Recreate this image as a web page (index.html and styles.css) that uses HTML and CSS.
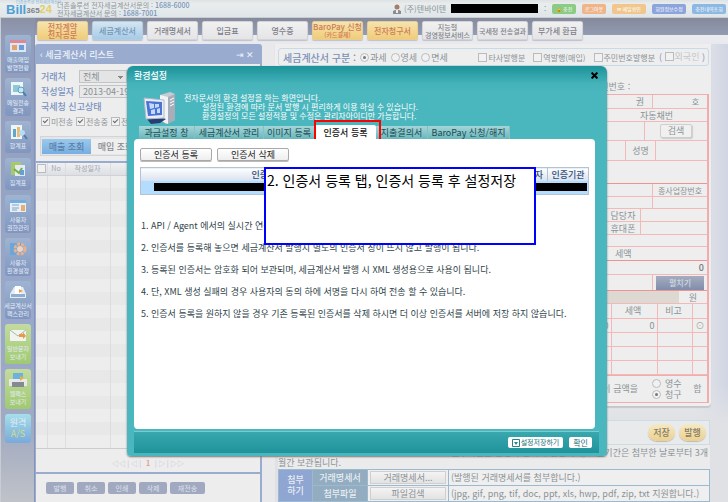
FILE: index.html
```html
<!DOCTYPE html>
<html lang="ko">
<head>
<meta charset="utf-8">
<title>Bill36524 환경설정</title>
<link rel="stylesheet" href="styles.css">
</head>
<body>
<header class="top">
  <a class="logo" href="#"><small>더존솔루션 전자세금계산서</small><span class="logo-name"><b>Bill</b><i>365</i><em>24</em></span></a>
  <p class="contact">더존솔루션 전자세금계산서문의 : <b>1688-6000</b><br>전자세금계산서 문의 : <b>1688-7001</b></p>
  <div class="account">
    <svg class="user" viewBox="0 0 8 10"><circle cx="4" cy="3" r="2.5" fill="#a77e69"/><path d="M0 10V7l2-1h4l2 1v3z" fill="#8c8c94"/><path d="M3 6h2v3H3z" fill="#eee"/></svg>
    <span class="company">(주)텐바이텐</span><span class="mask"></span><span class="colon">:</span>
    <button class="pill green">🔒 충전</button><button class="pill orange">로그아웃</button><button class="pill yellow wide">✉ 메일확인</button><button class="pill blue wide">회원정보수정</button><button class="pill sky wide">충전내역조회</button>
  </div>
</header>
<div class="app">
  <aside class="side">
    <a href="#" class="s-tall"><svg viewBox="0 0 20 16"><path d="M2 2h16v12H2z" fill="#dce7f3"/><path d="M2 2h16v3H2z" fill="#df8795"/><path d="M4 7h5v5H4z" fill="#e2a36e"/><path d="M11 7h5v5h-5z" fill="#6d9bdc"/></svg>매출매입<br>발행현황</a>
    <a href="#" class="s-tall"><svg viewBox="0 0 20 16"><path d="M3 1h12v13H3z" fill="#eef5f8"/><path d="M5 4h7v7H5z" fill="#8ec8d8"/><circle cx="13" cy="9" r="3" fill="#c7e7ee" stroke="#5d9ec2"/><path d="M15 11l3 4" stroke="#4b7fa9" stroke-width="2"/></svg>메일전송<br>결과</a>
    <a href="#" class="s-short"><svg viewBox="0 0 20 16"><path d="M3 1h11v14H3z" fill="#eef5f8"/><path d="M5 5h3v8H5z" fill="#5ea8ce"/><path d="M9 3h3v10H9z" fill="#e8bd72"/><circle cx="14" cy="9" r="3" fill="#b6dced"/><path d="M16 11l3 4" stroke="#537cac" stroke-width="2"/></svg>합계표</a>
    <a href="#" class="s-short"><svg viewBox="0 0 20 16"><path d="M3 1h10v13H3z" fill="#a8c96b"/><path d="M7 4h10v11H7z" fill="#e3eaf1"/><path d="M6 8l5 4 3-5" fill="none" stroke="#77ad49" stroke-width="2"/><path d="M12 9h4v5h-4z" fill="#64a0d8"/></svg>집계표</a>
    <a href="#" class="s-tall"><svg viewBox="0 0 20 16"><path d="M2 2h16v12H2z" fill="#e7eff5"/><path d="M2 2h16v3H2z" fill="#73aedd"/><path d="M4 7h7M4 10h7M4 12h5" stroke="#7da6cc"/><path d="M13 7h4v6h-4z" fill="#e9ad72"/></svg>사용자<br>권한관리</a>
    <a href="#" class="s-tall"><svg viewBox="0 0 20 16"><path d="M2 2h13v12H2z" fill="#6aa5dc"/><circle cx="12" cy="8" r="5" fill="none" stroke="#e9b18e" stroke-width="3" stroke-dasharray="3 1"/><circle cx="12" cy="8" r="3" fill="#edd4c2"/></svg>사용자<br>환경설정</a>
    <a href="#" class="s-tall"><svg viewBox="0 0 20 16"><path d="M2 10l4-7h9l3 7v4H2z" fill="#e4edf5"/><path d="M7 2h6v8H7z" fill="#fff"/><path d="M3 10h14v3H3z" fill="#90aed1"/><path d="M11 5l4 2-4 2z" fill="#e7a345"/></svg>세금계산서<br>팩스관리</a>
    <a href="#" class="s-green"><svg viewBox="0 0 20 16"><path d="M2 3h16v11H2z" fill="#f1f3ee"/><path d="M2 3l8 6 8-6" fill="none" stroke="#a8b8ac"/><path d="M11 7h4V5l3 4-3 3v-2h-4z" fill="#e79a4c"/></svg>일반문자<br>보내기</a>
    <a href="#" class="s-green"><svg viewBox="0 0 20 16"><path d="M5 1h10v8H5z" fill="#6db2dc"/><path d="M1 7h18v7H1z" fill="#e8e8ea"/><path d="M4 10h12v5H4z" fill="#848a91"/><path d="M12 4l4 2-4 3z" fill="#e8b04c"/></svg>웹팩스<br>보내기</a>
    <a href="#" class="s-as">원격<br><b>A/S</b></a>
  </aside>
  <div class="content">
    <nav class="menu">
      <a href="#" class="hot">전자계약<br>전자공문</a><a href="#" class="on">세금계산서</a><a href="#">거래명세서</a><a href="#">입금표</a><a href="#">영수증</a><a href="#" class="hot">BaroPay 신청<small>(카드결제)</small></a><a href="#" class="hot">전자청구서</a><a href="#" class="dense">지능형<br>경영정보서비스</a><a href="#" class="dense">국세청 전송결과</a><a href="#">부가세 환급</a>
    </nav>
    <div class="columns">
      <section class="list">
        <h2><span>세금계산서 리스트</span><span class="tools">⇥ ✕</span></h2>
        <div class="list-body">
          <div class="filters">
            <div class="frow"><label for="client">거래처</label><select id="client"><option>전체</option></select></div>
            <div class="frow"><label for="date">작성일자</label><input id="date" class="date" type="text" value="2013-04-19"></div>
            <div class="frow"><strong>국세청 신고상태</strong></div>
            <div class="frow checks"><label><input type="checkbox" checked>미전송</label><label><input type="checkbox" checked>전송중</label><label><input type="checkbox" checked>전송완료</label></div>
          </div>
          <div class="switch"><button class="sel">매출 조회</button><button>매입 조회</button></div>
          <table class="rows">
            <thead><tr><th class="c1"><input type="checkbox" aria-label="전체 선택"></th><th class="c2">No</th><th class="c3">작성일자</th><th></th></tr></thead>
            <tbody>
              <tr><td><td><td><td></tr><tr><td><td><td><td></tr><tr><td><td><td><td></tr><tr><td><td><td><td></tr><tr><td><td><td><td></tr><tr><td><td><td><td></tr><tr><td><td><td><td></tr>
              <tr><td><td><td><td></tr><tr><td><td><td><td></tr><tr><td><td><td><td></tr><tr><td><td><td><td></tr><tr><td><td><td><td></tr><tr><td><td><td><td></tr><tr><td><td><td><td></tr>
              <tr><td><td><td><td></tr><tr><td><td><td><td></tr><tr><td><td><td><td></tr><tr><td><td><td><td></tr><tr><td><td><td><td></tr><tr><td><td><td><td></tr><tr><td><td><td><td></tr>
            </tbody>
          </table>
          <div class="pager">◁◁ | ◁ | &nbsp; <b>1</b> &nbsp; | ▷ | ▷▷</div>
          <div class="actions"><button>발행</button><button>취소</button><button>인쇄</button><button>삭제</button><button class="long">재전송</button></div>
        </div>
      </section>
      <main class="doc">
        <div class="sheet">
          <div class="kind">
            <b>세금계산서 구분 :</b>
            <label><input type="radio" name="kind" checked>과세</label><label><input type="radio" name="kind">영세</label><label><input type="radio" name="kind">면세</label>
            <span class="kind-more"><label><input type="checkbox">타사발행분</label><label><input type="checkbox">역발행(매입)</label><label><input type="checkbox">주민번호발행분</label></span>
            <span class="foreign">( <label><input type="checkbox">외국인</label> )</span>
          </div>
          <p class="serial">일련번호 :</p>
          <div class="form">
            <div class="r h14"><span class="fill"></span><span class="w47 end">권</span><span class="w54 end">호</span></div>
            <div class="r h13"><span class="fill"></span><span class="w101">자동채번</span></div>
            <div class="r h19"><span class="fill"></span><span class="w62"><button class="find">검색</button></span></div>
            <div class="r h20"><span class="fill"></span><span class="w30">성명</span><span class="w51"></span></div>
            <div class="r h23 strong"><span class="fill"></span></div>
            <div class="r h13"><span class="fill"></span><span class="w54">종사업장번호</span></div>
            <div class="r h12"><span class="fill"></span><span class="w54"></span></div>
            <div class="r h13"><span class="fill"></span><span class="w35">담당자</span><span class="w66"></span></div>
            <div class="r h13"><span class="fill"></span><span class="w35">휴대폰</span><span class="w66"></span></div>
            <div class="r h12"><span class="fill"></span></div>
            <div class="r h14 strong"><span class="fill"></span><span class="w101 tax">세액</span></div>
            <div class="r h14"><span class="fill num">0</span></div>
            <div class="r h16 strong"><span class="fill"></span><span class="w54"><button class="fold">펼치기</button></span></div>
            <div class="r h13"><span class="fill beige"></span><span class="w28">원</span></div>
            <table class="items">
              <thead><tr><th></th><th class="i2">세액</th><th class="i3">비고</th><th class="i4"></th></tr></thead>
              <tbody><tr><td>0</td><td>0</td><td></td><td><button class="add" aria-label="추가">⊙</button></td></tr><tr><td><td><td><td></tr><tr><td><td><td><td></tr><tr><td><td><td><td></tr></tbody>
            </table>
            <div class="r sum"><span class="fill amount">이 금액을</span><span class="choice"><label><input type="radio" name="claim">영수</label><label><input type="radio" name="claim" checked>청구</label></span><span class="ham">함</span></div>
          </div>
        </div>
        <div class="save"><button>저장</button><button>발행</button></div>
        <p class="notice"><span>※ 첨부파일은 발행과 동시에 전송되며, 보관기간은 첨부한 날로부터 3개</span>월간 보관됩니다.</p>
        <table class="attach">
          <tr><th class="a1" rowspan="2">첨부<br>하기</th><th class="a2">거래명세서</th><td class="a3"><button>거래명세서...</button></td><td>(발행된 거래명세서를 첨부합니다.)</td></tr>
          <tr><th class="a2">첨부파일</th><td class="a3"><button>파일검색</button></td><td>(jpg, gif, png, tif, doc, ppt, xls, hwp, pdf, zip, txt 지원합니다.)</td></tr>
        </table>
      </main>
    </div>
  </div>
</div>

<div class="modal" role="dialog" aria-labelledby="dlg">
  <div class="m-title"><h1 id="dlg">환경설정</h1><button class="close" aria-label="닫기"><svg viewBox="0 0 6 6"><path d="M.5.5l5 5M5.5.5l-5 5" stroke="#000" stroke-width="1.700"/></svg></button></div>
  <div class="intro">
    <svg viewBox="0 0 34 34"><path d="M17 4l10-3 5 2v26l-9 4-6-4z" fill="#c7cbd2"/><path d="M17 4l8 2v27l-8-4z" fill="#f2f3f6"/><path d="M25 6l7-3v26l-7 4z" fill="#a7aeb9"/><path d="M27 9l4-2M27 12l4-2M27 15l4-2" stroke="#fff"/><path d="M4 28l8-3 11 3-6 4-9 1z" fill="#293d73"/><path d="M1 7l20 2v18L3 28z" fill="#e9edf5" stroke="#aeb9cc"/><path d="M3 10l16 1v13L5 25z" fill="#4a74d0"/><path d="M6 12l5 1v4l-4 1zM12 13h4v3l-4 1zM8 19l4-1v5H8zM14 18l3-1v5h-3z" fill="#c3d8ff"/></svg>
    <p>전자문서의 환경 설정을 하는 화면입니다.<span>설정된 환경에 따라 문서 발행 시 편리하게 이용 하실 수 있습니다.</span><span>환경설정의 모든 설정적용 및 수정은 관리자아이디만 가능합니다.</span></p>
  </div>
  <div class="tabs">
    <button class="t1">과금설정 창</button><button class="t2">세금계산서 관리</button><button class="t3">이미지 등록</button><button class="t4 active">인증서 등록</button><button class="t5">지출결의서</button><button class="t6">BaroPay 신청/해지</button>
    <span class="ring"></span>
  </div>
  <div class="pane">
    <div class="cert-buttons"><button>인증서 등록</button><button>인증서 삭제</button></div>
    <table class="certs">
      <thead><tr><th>인증서</th><th class="k2">만료일자</th><th class="k3">인증기관</th></tr></thead>
      <tbody><tr><td colspan="3"><span class="bar"></span></td></tr></tbody>
    </table>
    <ol>
      <li>1. API / Agent 에서의 실시간 연동시 인증서를 등록하여 주십시오.</li>
      <li>2. 인증서를 등록해 놓으면 세금계산서 발행시 별도의 인증서 창이 뜨지 않고 발행이 됩니다.</li>
      <li>3. 등록된 인증서는 암호화 되어 보관되며, 세금계산서 발행 시 XML 생성용으로 사용이 됩니다.</li>
      <li>4. 단, XML 생성 실패의 경우 사용자의 동의 하에 서명을 다시 하여 전송 할 수 있습니다.</li>
      <li>5. 인증서 등록을 원하지 않을 경우 기존 등록된 인증서를 삭제 하시면 더 이상 인증서를 서버에 저장 하지 않습니다.</li>
    </ol>
    <div class="note">2. 인증서 등록 탭, 인증서 등록 후 설정저장</div>
  </div>
  <div class="m-foot"><button class="store"><svg viewBox="0 0 8 8"><path d="M.5.5h7v7h-7z" fill="#fff" stroke="#24848b"/><path d="M2 3h4L4 6z" fill="#24848b"/></svg>설정저장하기</button><button>확인</button></div>
</div>
</body>
</html>
```
FILE: styles.css
```css
* { box-sizing: border-box; }
body { margin: 0; position: relative; min-height: 100vh; overflow: hidden; background: #e0e1e5; color: #8a9296; font: 9px/11px "Noto Sans CJK KR", sans-serif; }
h1, h2, p, ol { margin: 0; padding: 0; }
a { color: inherit; text-decoration: none; }
button, input, select { font: inherit; color: inherit; margin: 0; padding: 0; border: 0; white-space: nowrap; }
label { white-space: nowrap; }
table { border-collapse: collapse; width: 100%; }
th, td { padding: 0; font-weight: 400; }
svg { display: block; flex: none; }
input[type=checkbox], input[type=radio] { appearance: none; width: 9px; height: 9px; border: 1px solid #b9bcbf; background: #f1f1f1; display: inline-grid; place-content: center; flex: none; }
input[type=radio] { border-radius: 50%; }
input[type=radio]:checked::before { content: ""; width: 3px; height: 3px; border-radius: 50%; background: #777; }
input[type=checkbox]:checked::before { content: ""; width: 2px; height: 4px; margin-bottom: 2px; border: solid #666; border-width: 0 1px 1px 0; transform: rotate(45deg); }

.top { display: flex; align-items: center; height: 18px; padding: 0 2px 0 6px; background: linear-gradient(#dfe2e3, #e9edee 4px, #dfe5e8); font-size: 7px; line-height: 8px; border-bottom: 1px solid #c9cdd3; }
.logo { width: 51px; }
.logo small { display: block; height: 4px; padding-left: 10px; font-size: 4px; line-height: 4px; color: #7fb6dc; white-space: nowrap; }
.logo-name { display: flex; font: bold 11px/11px "Liberation Sans", sans-serif; }
.logo-name b { color: #4d9fd6; font-size: 13px; }
.logo-name i { font-style: normal; font-size: 8px; line-height: 13px; color: #7c8288; }
.logo-name em { font-style: normal; color: #e3cf63; }
.contact { color: #8c9298; white-space: nowrap; }
.contact b { color: #7694b9; font-weight: 500; }
.account { margin-left: auto; display: flex; align-items: center; gap: 6px; font-size: 8px; }
.user { width: 8px; height: 10px; }
.company { margin-left: -3px; width: 41px; white-space: nowrap; }
.mask { width: 87px; height: 9px; background: #000; }
.colon { width: 2px; }
.pill { width: 24px; height: 10px; border-radius: 2px; font-size: 5px; line-height: 8px; color: #fff; overflow: hidden; }
.wide { width: 34px; }
.green { background: #8ccb83; }
.orange { background: #f0b48a; }
.yellow { background: #f0c68c; }
.blue { background: #8ca3dc; }
.sky { background: #8db8e2; }

.app { display: flex; min-height: calc(100vh - 18px); }
.side { flex: none; width: 35px; display: flex; flex-direction: column; gap: 5px; padding: 17px 5px 0; background: linear-gradient(#8b91a4, #929dba 20px, #98a8cb 60%, #a1aac0 85%, #c0c3c9); border-right: 1px solid #8493b6; border-left: 1px solid #c8ccd5; }
.side a { width: 26px; margin-left: -1px; display: flex; flex-direction: column; align-items: center; padding-top: 3px; border-radius: 3px; background: linear-gradient(#9fb4d1, #8096bf); color: #e6ebf5; font-size: 6px; line-height: 8px; text-align: center; white-space: nowrap; }
.side svg { width: 20px; height: 16px; margin-bottom: 2px; }
.side .s-tall { height: 38px; }
.side .s-short { height: 32px; }
.side .s-green { height: 40px; background: linear-gradient(#c3dba0, #9fca70); }
.side .s-as { height: 29px; background: linear-gradient(#a5dfe9, #7aa9dc); font-size: 9px; line-height: 11px; }
.s-as b { color: #d4dd7c; font-weight: 400; }

.content { flex: 1; min-width: 0; }
.menu { display: flex; gap: 4px; height: 26px; padding: 3px 0 0 2px; background: linear-gradient(#858a9b, #929bb1 17px, #ebecee 17px, #e8e9ee); }
.menu a { width: 51px; height: 19px; display: grid; place-content: center; text-align: center; border-radius: 2px; background: linear-gradient(#f0f0f1, #e5e5e8); border: 1px solid #d3d4d9; color: #7d7f86; font-size: 8px; line-height: 8px; font-weight: 500; white-space: nowrap; box-shadow: 0 1px 1px #bfc1c9; }
.menu .dense { font-size: 7px; }
.menu small { font-size: 6px; line-height: 7px; }
.menu .hot { background: linear-gradient(#f5e4ad, #f1cc78); color: #cd7a5a; border-color: #e4cd98; }
.menu .on { background: linear-gradient(#d4e5f1, #a6cce8); color: #7595b4; border-color: #b4ccdf; }
.columns { display: flex; gap: 13px; background: linear-gradient(90deg, #e9e9eb 95%, #d0d5e3); }

.list { flex: none; width: 227px; }
.list h2 { height: 20px; padding: 0 8px 0 5px; display: flex; align-items: center; justify-content: space-between; background: #9aabd0; border-radius: 3px 3px 0 0; color: #edf1f8; font-size: 9px; font-weight: 500; }
.list h2 span:first-child::before { content: "‹ "; }
.list-body { border: solid #9aabd0; border-width: 0 2px 1px 1px; background: #ededee; }
.filters { padding: 5px 0 7px 5px; }
.frow { height: 15px; display: flex; align-items: center; color: #7892be; font-weight: 500; }
.frow > label { width: 38px; }
.frow strong { font-weight: 500; }
.frow select, .date { width: 58px; height: 13px; border: 1px solid #c1c5ca; background: #e9e9ea; padding-left: 3px; color: #888f93; font-weight: 400; }
.frow select { width: 48px; appearance: none; background: linear-gradient(#888, #888) 38px 5px / 5px 1px no-repeat, linear-gradient(#888, #888) 39px 6px / 3px 1px no-repeat, linear-gradient(#888, #888) 40px 7px / 1px 1px no-repeat, #e4e4e5; line-height: 11px; }
.frow.checks { gap: 2px; color: #8d9598; font-weight: 400; font-size: 8px; }
.checks label { width: auto; min-width: 33px; display: flex; align-items: center; gap: 1px; }
.switch { display: flex; height: 20px; margin: 0 4px 5px; padding: 2px 1px 1px; border: 1px solid #d2d4d7; background: #e4e5e6; }
.switch button { width: 49px; background: #efefef; color: #858a90; font-weight: 500; }
.switch .sel { background: linear-gradient(#9bc9eb, #77ade0); color: #5a7fa8; }
.rows { table-layout: fixed; border-top: 2px solid #9aabd0; font-size: 7px; }
.rows th { height: 13px; line-height: 11px; background: linear-gradient(#f0f0f1, #dddfe4); border-bottom: 1px solid #d0d2d7; color: #a2a7b0; }
.rows th, .rows td { border-right: 1px solid #dcdde0; }
.rows td { height: 13px; background: #ededed; }
.rows tr:nth-child(even) td { background: #e8e8e9; }
.rows th input { display: grid; margin-left: 1px; }
.c1 { width: 11px; }
.c2 { width: 18px; }
.c3 { width: 45px; }
.pager { height: 24px; padding-top: 8px; border-top: 1px solid #ccc; text-align: center; line-height: 12px; font-size: 7px; color: #c3c4c8; }
.pager b { color: #e69a92; }
.actions { display: flex; gap: 3px; padding: 8px 10px; border-top: 2px solid #9aabd0; }
.actions button { width: 28px; height: 12px; border-radius: 2px; background: #a0a9c0; color: #dee2ec; font-size: 7px; line-height: 10px; }
.actions .long { width: 35px; }

.doc { flex: 1; min-width: 0; padding: 0 18px 0 3px; background: linear-gradient(#e0e1e500 340px, #e0e1e5 380px); }
.sheet { margin: 0 -1px 14px -3px; padding: 4px 2px 3px 3px; border-radius: 0 0 4px 4px; background: #eee; box-shadow: 0 2px 1px #c6c7cb; }
.kind { display: flex; align-items: center; gap: 4px; height: 18px; padding: 0 3px 0 4px; border: 1px solid #c6dbe8; border-radius: 3px; }
.kind b { font-size: 10px; font-weight: 500; color: #7890b8; white-space: nowrap; }
.kind label { display: inline-flex; align-items: center; gap: 1px; }
.kind-more { margin-left: auto; display: flex; gap: 8px; font-size: 8px; }
.foreign { color: #8e93c4; white-space: nowrap; }
.foreign label { color: #c4c8ca; }
.serial { width: 117px; margin: 15px 0 3px auto; height: 10px; }
.form { border: 1px solid #f1adad; border-right-width: 2px; }
.r { display: flex; border-bottom: 1px solid #f3b8b8; }
.r > span { display: flex; align-items: center; justify-content: center; border-right: 1px solid #f3b8b8; white-space: nowrap; }
.r > span:last-child { border-right: 0; }
.r > .fill { flex: 1; }
.strong { border-bottom-color: #ee9292; }
.h12 { height: 12px; } .h13 { height: 13px; } .h14 { height: 14px; } .h16 { height: 16px; } .h19 { height: 19px; } .h20 { height: 20px; } .h23 { height: 23px; }
.w28 { width: 28px; } .w30 { width: 30px; } .w35 { width: 35px; } .w47 { width: 47px; } .w51 { width: 51px; } .w54 { width: 54px; } .w62 { width: 62px; } .w66 { width: 66px; } .w101 { width: 101px; }
.r > .w54 { font-size: 8px; }
.r > .end { justify-content: flex-end; padding-right: 8px; }
.r > .tax { justify-content: flex-start; padding-left: 9px; }
.r > .num { justify-content: flex-end; padding-right: 3px; font-weight: 500; color: #777; }
.r > .beige { background: #ddd9d2; border-right: 0; }
.find { width: 32px; height: 14px; line-height: 12px; border: 1px solid #cfcfcf; border-radius: 2px; background: #f0f0f0; box-shadow: 1px 1px 1px #ccc; }
.fold { width: 48px; height: 14px; line-height: 12px; background: linear-gradient(#a5adbf, #808caa); color: #dde1ea; }
.items { table-layout: fixed; line-height: 11px; }
.items th, .items td { height: 14px; border: 1px solid #f3b8b8; border-width: 0 1px 1px 0; text-align: right; padding-right: 2px; }
.items th { text-align: center; }
.items th:last-child, .items td:last-child { border-right: 0; }
.i2 { width: 46px; } .i3 { width: 35px; } .i4 { width: 15px; }
.add { background: none; width: 10px; height: 10px; line-height: 10px; color: #aaa; }
.sum { height: 27px; border-bottom: 0; border-top: 1px solid #f1adad; }
.sum > span { border: 0; }
.r > .amount { justify-content: flex-end; padding-right: 14px; }
.r > .choice { width: 36px; flex-direction: column; align-items: flex-start; border: 0; }
.choice label { display: flex; align-items: center; gap: 4px; }
.sum .ham { width: 19px; }
.save { display: flex; justify-content: flex-end; gap: 4px; height: 25px; padding: 3px; border: 1px solid #cddbe5; background: #e9eaec; }
.save button { width: 27px; height: 17px; line-height: 15px; border-radius: 9px; background: linear-gradient(#f5e9c4, #edd08f); color: #857b64; font-weight: 500; box-shadow: 0 1px 1px #bbb; }
.notice { padding: 3px 2px 0 0; height: 24px; line-height: 10px; background: #ebebec; white-space: nowrap; }
.notice span { display: block; text-align: right; }
.attach { background: #efefef; }
.attach th, .attach td { height: 16px; border: 1px solid #9bbad0; padding: 0 2px; line-height: 11px; white-space: nowrap; }
.attach th { color: #e7eef4; font-weight: 500; background: #93acc0; padding: 0; }
.attach .a1 { width: 34px; background: #8fa5d2; }
.attach .a2 { width: 55px; }
.attach .a3 { width: 81px; }
.attach button { display: block; width: 100%; height: 13px; line-height: 11px; background: linear-gradient(#f3f3f3, #e3e3e3); border: 1px solid #cfcfcf; }

.modal { position: absolute; left: 127px; top: 66px; width: 480px; padding: 0 8px 3px 7px; border-radius: 6px 6px 4px 4px; background: linear-gradient(#1c9299, #45b3ba 18px, #4ab6bd 26px); box-shadow: 0 1px 2px #777; color: #2e4248; }
.m-title { display: flex; align-items: center; justify-content: space-between; height: 19px; color: #fff; }
.m-title h1 { font-size: 9px; line-height: 14px; font-weight: 500; }
.close { width: 8px; height: 8px; background: none; }
.close svg { width: 7px; height: 7px; }
.intro { display: flex; height: 41px; padding: 6px 0 0 9px; color: #fff; font-size: 8px; line-height: 9px; }
.intro svg { width: 34px; height: 34px; margin-right: 7px; }
.intro p { padding-top: 2px; white-space: nowrap; }
.intro span { display: block; padding-left: 18px; }
.tabs { position: relative; display: flex; align-items: flex-end; height: 13px; padding-left: 5px; }
.tabs button { height: 13px; line-height: 11px; background: linear-gradient(#a6d5d8, #68b7bc); color: #204a50; border-right: 1px solid #86c0c0; }
.tabs .active { background: #fff; color: #111; font-weight: 500; border: 0; height: 14px; border-radius: 2px 2px 0 0; }
.t1 { width: 56px; } .t2 { width: 69px; } .t3 { width: 51px; } .t4 { width: 61px; } .t5 { width: 52px; } .t6 { width: 82px; }
.ring { position: absolute; left: 180px; top: -6px; width: 67px; height: 31px; border: 2px solid #f00; }
.pane { min-height: 290px; position: relative; margin-right: 4px; padding: 9px 6px; border-radius: 4px; background: #fff; }
.pane .note { position: absolute; left: 130px; top: 28px; width: 272px; height: 78px; padding: 2px 1px; border: 2px solid #00f; background: #fff; color: #000; font-size: 14px; line-height: 18px; white-space: nowrap; }
.cert-buttons { display: flex; gap: 5px; margin-bottom: 6px; }
.cert-buttons button { width: 72px; height: 13px; line-height: 11px; border: 1px solid #a9a9a9; border-radius: 2px; background: linear-gradient(#fff, #eee); color: #222; box-shadow: 0 1px 0 #bbb; }
.certs { table-layout: fixed; border: 1px solid #b4c3d0; }
.certs th { height: 13px; background: linear-gradient(#fff, #d5e0ee); border-right: 1px solid #b4c3d0; color: #304c78; font-weight: 500; }
.certs td { height: 14px; background: #b3dcff; }
.certs .k2 { width: 160px; padding-right: 4px; text-align: right; }
.k3 { width: 41px; }
.bar { display: block; height: 8px; margin: 0 1px 0 13px; background: #000; }
.pane ol { margin-top: 20px; padding-left: 1px; list-style: none; line-height: 22px; white-space: nowrap; }
.m-foot { display: flex; align-items: center; justify-content: flex-end; gap: 6px; height: 22px; margin: 2px 0 0; padding-right: 7px; background: linear-gradient(#39a7ae, #1f939a); border-top: 1px solid #7bcbd0; }
.m-foot button { width: 23px; height: 11px; border-radius: 2px; background: #fff; color: #24747b; font-size: 8px; line-height: 9px; }
.m-foot .store { width: 55px; display: flex; align-items: center; justify-content: center; gap: 1px; font-size: 7px; }
.store svg { width: 8px; height: 8px; }
```
